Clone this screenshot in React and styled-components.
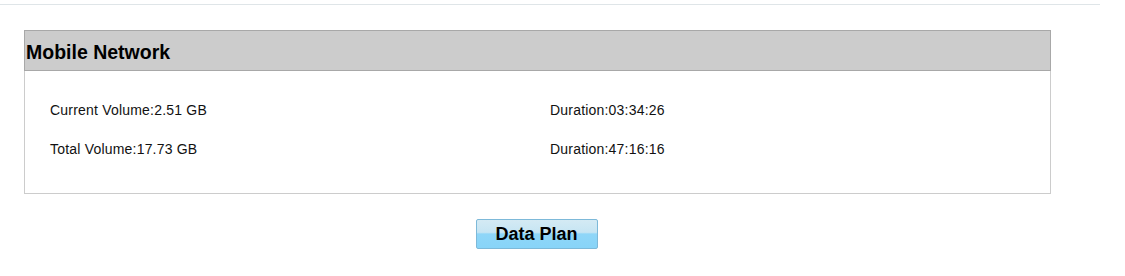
import styled, { createGlobalStyle } from "styled-components";

const GlobalStyle = createGlobalStyle`
  body {
    margin: 0;
    background: #ffffff;
    font-family: "Liberation Sans", Arial, sans-serif;
  }
`;

const ROWS = [
  { volume: "Current Volume:2.51 GB", duration: "Duration:03:34:26" },
  { volume: "Total Volume:17.73 GB", duration: "Duration:47:16:16" },
];

const App = () => {
  return (
    <Page>
      <GlobalStyle />
      <TopRule />
      <Content>
        <Panel>
          <PanelHeader>Mobile Network</PanelHeader>
          <PanelBody>
            {ROWS.map((row) => (
              <Row key={row.volume}>
                <Cell>{row.volume}</Cell>
                <Cell>{row.duration}</Cell>
              </Row>
            ))}
          </PanelBody>
        </Panel>
        <Actions>
          <PlanButton>Data Plan</PlanButton>
        </Actions>
      </Content>
    </Page>
  );
};

const Page = styled.div`
  width: 1125px;
  height: 276px;
  padding-top: 4px;
  box-sizing: border-box;
`;

const TopRule = styled.div`
  width: 1100px;
  height: 1px;
  background: #dfe5e8;
`;

const Content = styled.div`
  width: 1027px;
  margin: 25px 0 0 24px;
`;

const Panel = styled.div`
  border: 1px solid #cccccc;
  box-sizing: border-box;
`;

const PanelHeader = styled.div`
  height: 41px;
  box-sizing: border-box;
  background: #cccccc;
  border: 1px solid #a8a8a8;
  margin: -1px -1px 0;
  padding: 3px 0 0 1px;
  display: flex;
  align-items: center;
  font-size: 19.5px;
  font-weight: bold;
  color: #000;
`;

const PanelBody = styled.div`
  padding: 31px 0 36px 25px;
  display: flex;
  flex-direction: column;
  gap: 23px;
`;

const Row = styled.div`
  display: grid;
  grid-template-columns: 500px 1fr;
  font-size: 14px;
  letter-spacing: 0.2px;
  line-height: 16px;
  color: #111;
`;

const Cell = styled.span``;

const Actions = styled.div`
  display: flex;
  justify-content: center;
  margin-top: 25px;
  padding-right: 2px;
`;

const PlanButton = styled.button`
  width: 122px;
  height: 30px;
  border: 1px solid #7db9d9;
  border-radius: 2px;
  background: linear-gradient(
    to bottom,
    #d4eaf4 0%,
    #c6e5f3 44%,
    #8fd6f8 50%,
    #88d4f8 100%
  );
  font-family: "Liberation Sans", Arial, sans-serif;
  font-size: 18px;
  font-weight: bold;
  color: #000;
  padding: 0;
  cursor: pointer;
`;

export default App;
